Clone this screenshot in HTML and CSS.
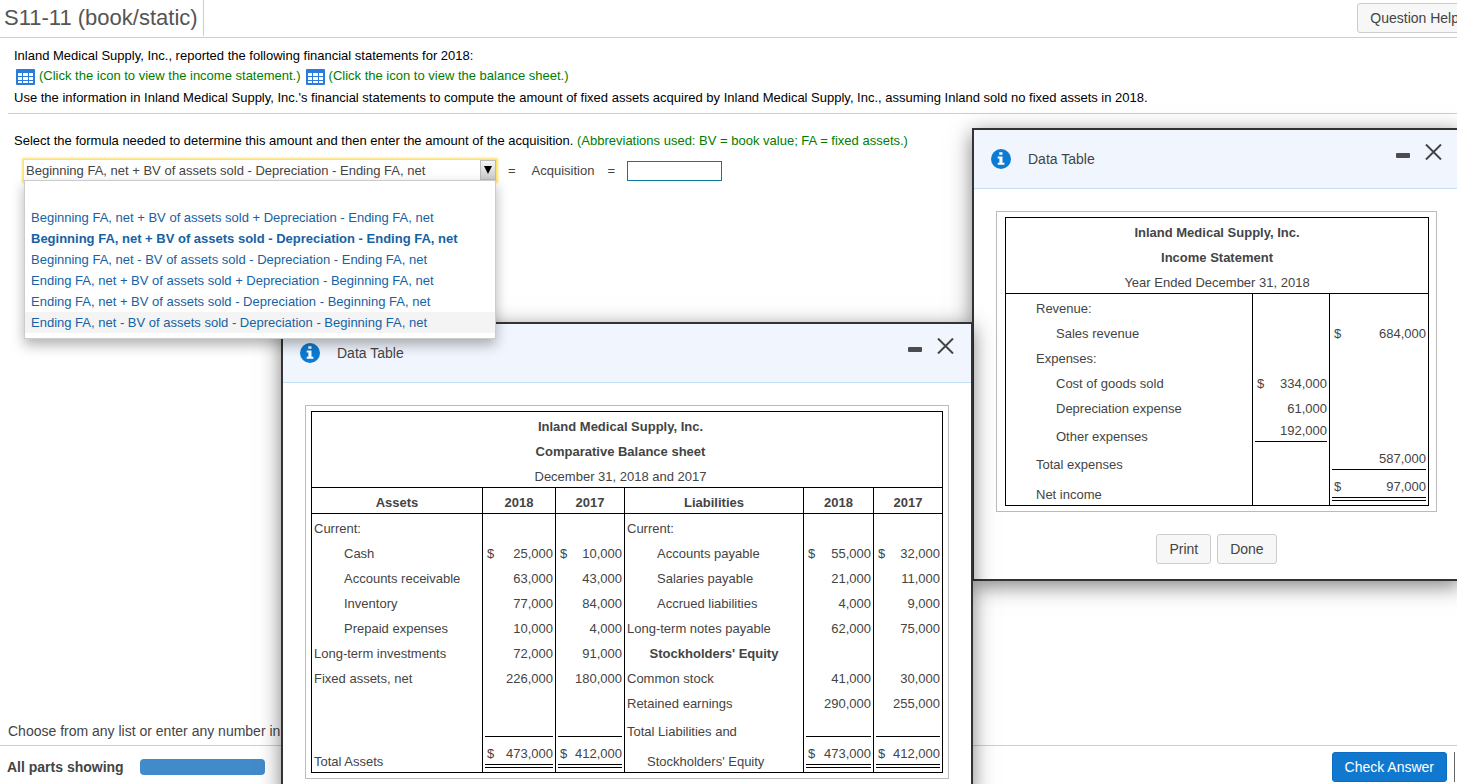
FILE: index.html
```html
<!DOCTYPE html>
<html lang="en">
<head>
<meta charset="utf-8">
<title>S11-11 (book/static)</title>
<link rel="stylesheet" href="styles.css">
</head>
<body>
<svg class="sprite" aria-hidden="true">
  <symbol id="icon-grid" viewBox="0 0 19 16">
    <rect width="19" height="16" rx="1" fill="#2a7bdc"/>
    <path fill="#fff" d="M2 4h4v3H2zM7 4h5v3H7zM13 4h4v3h-4zM2 8h4v3H2zM7 8h5v3H7zM13 8h4v3h-4zM2 12h4v2H2zM7 12h5v2H7zM13 12h4v2h-4z"/>
  </symbol>
  <symbol id="icon-info" viewBox="0 0 20 20">
    <circle cx="10" cy="10" r="10" fill="#0b7bd3"/>
    <path fill="#fff" d="M8.3 3.2h3.2v2.6H8.3zM6.7 7.6h4.8v6.1h1.9v2H6.7v-2h1.7V9.6H6.7z"/>
  </symbol>
  <symbol id="icon-min" viewBox="0 0 14 5">
    <rect width="14" height="5" rx="1" fill="#4c4c4f"/>
  </symbol>
  <symbol id="icon-close" viewBox="0 0 17 16">
    <path d="M1 .5 16 15.5M16 .5 1 15.5" fill="none" stroke="#444" stroke-width="2"/>
  </symbol>
</svg>

<div class="page">
  <header class="topbar">
    <h1 class="topbar-title">S11-11 (book/static)</h1>
    <button class="btn btn-help" type="button">Question Help</button>
  </header>

  <main class="content">
    <section class="intro">
      <p>Inland Medical Supply, Inc., reported the following financial statements for 2018:</p>
      <p class="links">
        <svg class="grid-icon"><use href="#icon-grid"/></svg>
        <a href="#income">(Click the icon to view the income statement.)</a>
        <svg class="grid-icon"><use href="#icon-grid"/></svg>
        <a href="#balance">(Click the icon to view the balance sheet.)</a>
      </p>
      <p>Use the information in Inland Medical Supply, Inc.'s financial statements to compute the amount of fixed assets acquired by Inland Medical Supply, Inc., assuming Inland sold no fixed assets in 2018.</p>
    </section>

    <section class="question">
      <p>Select the formula needed to determine this amount and then enter the amount of the acquisition. <span class="note">(Abbreviations used: BV = book value; FA = fixed assets.)</span></p>
      <div class="formula">
        <div class="picker">
          <select class="picker-field" aria-label="Formula">
            <option>Beginning FA, net + BV of assets sold - Depreciation - Ending FA, net</option>
          </select>
          <span class="picker-arrow"><svg width="8" height="8" viewBox="0 0 8 8"><path d="M0 0h8L4 8z"/></svg></span>
          <ul class="menu" role="listbox" aria-label="Formula options">
            <li role="option"></li>
            <li role="option">Beginning FA, net + BV of assets sold + Depreciation - Ending FA, net</li>
            <li role="option" class="selected" aria-selected="true">Beginning FA, net + BV of assets sold - Depreciation - Ending FA, net</li>
            <li role="option">Beginning FA, net - BV of assets sold - Depreciation - Ending FA, net</li>
            <li role="option">Ending FA, net + BV of assets sold + Depreciation - Beginning FA, net</li>
            <li role="option">Ending FA, net + BV of assets sold - Depreciation - Beginning FA, net</li>
            <li role="option" class="hovered">Ending FA, net - BV of assets sold - Depreciation - Beginning FA, net</li>
          </ul>
        </div>
        <span>=</span>
        <label class="acq-label" for="acq">Acquisition</label>
        <span>=</span>
        <input class="acq-input" id="acq" type="text">
      </div>
    </section>
  </main>

  <p class="hint">Choose from any list or enter any number in the input fields.</p>

  <footer class="bottombar">
    <span class="parts">All parts showing</span>
    <span class="progress"></span>
    <button class="btn btn-primary" type="button">Check Answer</button>
    <span class="divider"></span>
  </footer>
</div>

<section class="dialog dialog-income" id="income" role="dialog" aria-label="Income statement">
  <header class="dialog-head">
    <svg class="info-icon"><use href="#icon-info"/></svg>
    <h2>Data Table</h2>
    <button class="icon-btn" type="button" aria-label="Minimize"><svg class="min-icon"><use href="#icon-min"/></svg></button>
    <button class="icon-btn" type="button" aria-label="Close"><svg class="close-icon"><use href="#icon-close"/></svg></button>
  </header>
  <div class="dialog-body">
    <div class="frame frame-wide">
      <table class="sheet income">
        <colgroup><col class="i-label"><col class="i-sub"><col class="i-total"></colgroup>
        <thead>
          <tr><th colspan="3">Inland Medical Supply, Inc.</th></tr>
          <tr><th colspan="3">Income Statement</th></tr>
          <tr class="ruled"><td colspan="3" class="center">Year Ended December 31, 2018</td></tr>
        </thead>
        <tbody>
          <tr><td class="in1">Revenue:</td><td></td><td></td></tr>
          <tr><td class="in2">Sales revenue</td><td></td><td><div class="money"><span>$</span><span>684,000</span></div></td></tr>
          <tr><td class="in1">Expenses:</td><td></td><td></td></tr>
          <tr><td class="in2">Cost of goods sold</td><td><div class="money"><span>$</span><span>334,000</span></div></td><td></td></tr>
          <tr><td class="in2">Depreciation expense</td><td><div class="money">61,000</div></td><td></td></tr>
          <tr class="tall"><td class="in2">Other expenses</td><td class="line"><div class="money">192,000</div></td><td></td></tr>
          <tr class="tall"><td class="in1">Total expenses</td><td></td><td class="line"><div class="money">587,000</div></td></tr>
          <tr class="total"><td class="in1">Net income</td><td></td><td class="double"><div class="money"><span>$</span><span>97,000</span></div></td></tr>
        </tbody>
      </table>
    </div>
    <div class="actions">
      <button class="btn" type="button">Print</button>
      <button class="btn" type="button">Done</button>
    </div>
  </div>
</section>

<section class="dialog dialog-balance" id="balance" role="dialog" aria-label="Balance sheet">
  <header class="dialog-head">
    <svg class="info-icon"><use href="#icon-info"/></svg>
    <h2>Data Table</h2>
    <button class="icon-btn" type="button" aria-label="Minimize"><svg class="min-icon"><use href="#icon-min"/></svg></button>
    <button class="icon-btn" type="button" aria-label="Close"><svg class="close-icon"><use href="#icon-close"/></svg></button>
  </header>
  <div class="dialog-body">
    <div class="frame">
      <table class="sheet balance">
        <colgroup><col class="b-assets"><col class="b-a18"><col class="b-a17"><col class="b-liab"><col class="b-l18"><col class="b-l17"></colgroup>
        <thead>
          <tr><th colspan="6" class="heading">Inland Medical Supply, Inc.</th></tr>
          <tr><th colspan="6" class="heading">Comparative Balance sheet</th></tr>
          <tr class="ruled"><td colspan="6" class="center heading">December 31, 2018 and 2017</td></tr>
          <tr class="ruled"><th>Assets</th><th>2018</th><th>2017</th><th>Liabilities</th><th>2018</th><th>2017</th></tr>
        </thead>
        <tbody>
          <tr><td>Current:</td><td></td><td></td><td>Current:</td><td></td><td></td></tr>
          <tr><td class="in1">Cash</td><td><div class="money"><span>$</span><span>25,000</span></div></td><td><div class="money"><span>$</span><span>10,000</span></div></td><td class="in1">Accounts payable</td><td><div class="money"><span>$</span><span>55,000</span></div></td><td><div class="money"><span>$</span><span>32,000</span></div></td></tr>
          <tr><td class="in1">Accounts receivable</td><td><div class="money">63,000</div></td><td><div class="money">43,000</div></td><td class="in1">Salaries payable</td><td><div class="money">21,000</div></td><td><div class="money">11,000</div></td></tr>
          <tr><td class="in1">Inventory</td><td><div class="money">77,000</div></td><td><div class="money">84,000</div></td><td class="in1">Accrued liabilities</td><td><div class="money">4,000</div></td><td><div class="money">9,000</div></td></tr>
          <tr><td class="in1">Prepaid expenses</td><td><div class="money">10,000</div></td><td><div class="money">4,000</div></td><td>Long-term notes payable</td><td><div class="money">62,000</div></td><td><div class="money">75,000</div></td></tr>
          <tr><td>Long-term investments</td><td><div class="money">72,000</div></td><td><div class="money">91,000</div></td><th>Stockholders' Equity</th><td></td><td></td></tr>
          <tr><td>Fixed assets, net</td><td><div class="money">226,000</div></td><td><div class="money">180,000</div></td><td>Common stock</td><td><div class="money">41,000</div></td><td><div class="money">30,000</div></td></tr>
          <tr><td></td><td></td><td></td><td>Retained earnings</td><td><div class="money">290,000</div></td><td><div class="money">255,000</div></td></tr>
          <tr class="tall"><td></td><td class="line"><div class="money"></div></td><td class="line"><div class="money"></div></td><td>Total Liabilities and</td><td class="line"><div class="money"></div></td><td class="line"><div class="money"></div></td></tr>
          <tr class="total"><td>Total Assets</td><td class="double"><div class="money"><span>$</span><span>473,000</span></div></td><td class="double"><div class="money"><span>$</span><span>412,000</span></div></td><td class="in-sum">Stockholders' Equity</td><td class="double"><div class="money"><span>$</span><span>473,000</span></div></td><td class="double"><div class="money"><span>$</span><span>412,000</span></div></td></tr>
        </tbody>
      </table>
    </div>
  </div>
</section>
</body>
</html>
```
FILE: styles.css
```css
* { box-sizing: border-box; }

body {
  margin: 0;
  height: 100vh;
  position: relative;
  overflow: hidden;
  background: #fff;
  color: #444;
  font: 13px/19px "Liberation Sans", Arial, sans-serif;
}

h1, h2, p, ul { margin: 0; padding: 0; font-weight: normal; }
button, select, input { font: inherit; color: inherit; }
.sprite { position: absolute; width: 0; height: 0; }

.page { display: flex; flex-direction: column; min-height: 100vh; }

.topbar {
  display: flex;
  justify-content: space-between;
  height: 38px;
  padding-bottom: 1px;
  border-bottom: 1px solid #ccd;
  overflow: hidden;
}
.topbar-title {
  padding: 0 5px 0 4px;
  border-right: 1px solid #ccd;
  font-size: 22px;
  line-height: 36px;
  color: #555;
}

.btn {
  height: 30px;
  padding: 0 12px;
  border: 1px solid #ccc;
  border-radius: 3px;
  background: #f7f7f7;
  font-size: 14px;
}
.btn-help { flex: none; margin: 3px -15px 0 0; }

.content { flex: 1; padding: 7px 0 0 8px; color: #000; }
.intro { padding: 0 6px 5px; border-bottom: 1px solid #ccd; line-height: 21px; }
.links { display: flex; align-items: flex-start; gap: 5px; height: 21px; padding-left: 2px; line-height: 19px; }
.links a, .note { color: #007d00; text-decoration: none; }
.links a { margin-left: -1px; }
.grid-icon { width: 19px; height: 16px; margin-top: 3px; }

.question { padding: 17px 6px 0; }
.formula {
  display: flex;
  align-items: center;
  gap: 12px;
  margin-top: 10px;
  padding-left: 10px;
  color: #444;
}
.picker { position: relative; width: 472px; height: 21px; box-shadow: 0 0 2px 2px #ffe066; }
.picker-field {
  appearance: none;
  display: block;
  width: 100%;
  height: 21px;
  padding: 0 18px 0 2px;
  border: 0;
  border-radius: 0;
  background: #fff;
  outline: none;
}
.picker-arrow {
  position: absolute;
  top: 0;
  right: 0;
  width: 16px;
  height: 20px;
  display: flex;
  align-items: center;
  justify-content: center;
  border: 1px solid #bbb;
  background: linear-gradient(#f4f4f4, #ccc);
  pointer-events: none;
}
.menu {
  position: absolute;
  z-index: 30;
  top: 20px;
  left: 0;
  right: 0;
  padding: 5px 0;
  border: 1px solid #ccc;
  background: #fff;
  box-shadow: 0 6px 12px rgba(0, 0, 0, .3);
  list-style: none;
  color: #1562a5;
}
.menu li { height: 21px; padding-left: 6px; line-height: 21px; }
.menu .selected { font-weight: bold; }
.menu .hovered { background: #f4f4f4; }
.acq-label { padding: 0 1px 0 4px; }
.acq-input { width: 95px; height: 20px; padding: 0 3px; border: 1px solid #0b7a98; }

.hint { padding: 0 8px 4px; font-size: 14px; }
.bottombar {
  display: flex;
  align-items: center;
  height: 39px;
  padding: 4px 2px 0 7px;
  border-top: 1px solid #ccd;
}
.parts { font-size: 14px; font-weight: bold; }
.progress { width: 125px; height: 16px; margin-left: 16px; border-radius: 4px; background: #428bca; }
.btn-primary { margin-left: auto; border-color: #0b6cc0; background: #1079cf; color: #fff; }
.divider { width: 1px; height: 30px; margin-left: 7px; background: #666; }

.dialog {
  position: absolute;
  border: 2px solid #333;
  background: #fff;
  box-shadow: 0 5px 20px rgba(0, 0, 0, .5);
}
.dialog-income { z-index: 10; top: 128px; left: 972px; }
.dialog-balance { z-index: 20; top: 322px; left: 281px; }
.dialog-head {
  display: flex;
  align-items: center;
  height: 59px;
  padding: 0 17px;
  border-bottom: 1px solid #c4e1f6;
  background: #f1f6fe;
}
.dialog-head h2 { flex: 1; padding-left: 17px; font-size: 14px; }
.info-icon { width: 20px; height: 20px; }
.icon-btn { display: flex; align-items: center; height: 36px; padding: 0; border: 0; background: none; margin: 0 0 14px 15px; }
.min-icon { width: 14px; height: 5px; margin-top: 6px; }
.close-icon { width: 17px; height: 16px; }
.dialog-body { padding: 22px 22px 15px; }
.frame { padding: 5px; border: 1px solid #bbb; }
.frame-wide { padding: 5px 7px 5px 8px; }

.sheet { border: 1px solid #000; border-spacing: 0; table-layout: fixed; }
.income { width: 424px; }
.balance { width: 632px; }
.sheet tr { height: 25px; }
.sheet .ruled { height: 26px; }
.sheet .tall { height: 28px; }
.sheet .total { height: 30px; }
.sheet td, .sheet th { padding: 0 2px 1px; vertical-align: bottom; }
.sheet .ruled > * { border-bottom: 1px solid #000; }
.sheet td + td, .sheet td + th, .sheet th + td, .sheet th + th { border-left: 1px solid #000; }
.sheet .center { text-align: center; }
.balance .heading { padding-right: 15px; }
.income .in1 { padding-left: 30px; }
.income .in2 { padding-left: 50px; }
.balance .in1 { padding-left: 32px; }
.balance .in-sum { padding-left: 22px; }
.i-label { width: 246px; }
.i-sub { width: 77px; }
.i-total { width: 99px; }
.b-assets { width: 170px; }
.b-a18 { width: 73px; }
.b-a17 { width: 69px; }
.b-liab { width: 179px; }
.b-l18 { width: 70px; }
.b-l17 { width: 69px; }

.money { display: flex; justify-content: flex-end; padding-left: 2px; }
.money span:first-child { flex: 1; }
.sheet .line { padding-bottom: 5px; }
.line .money { padding-bottom: 1px; border-bottom: 1px solid #000; }
.sheet .double { padding-bottom: 4px; }
.double .money { padding-bottom: 1px; border-bottom: 4px double #000; }

.actions { display: flex; justify-content: center; gap: 6px; margin-top: 22px; }
```
